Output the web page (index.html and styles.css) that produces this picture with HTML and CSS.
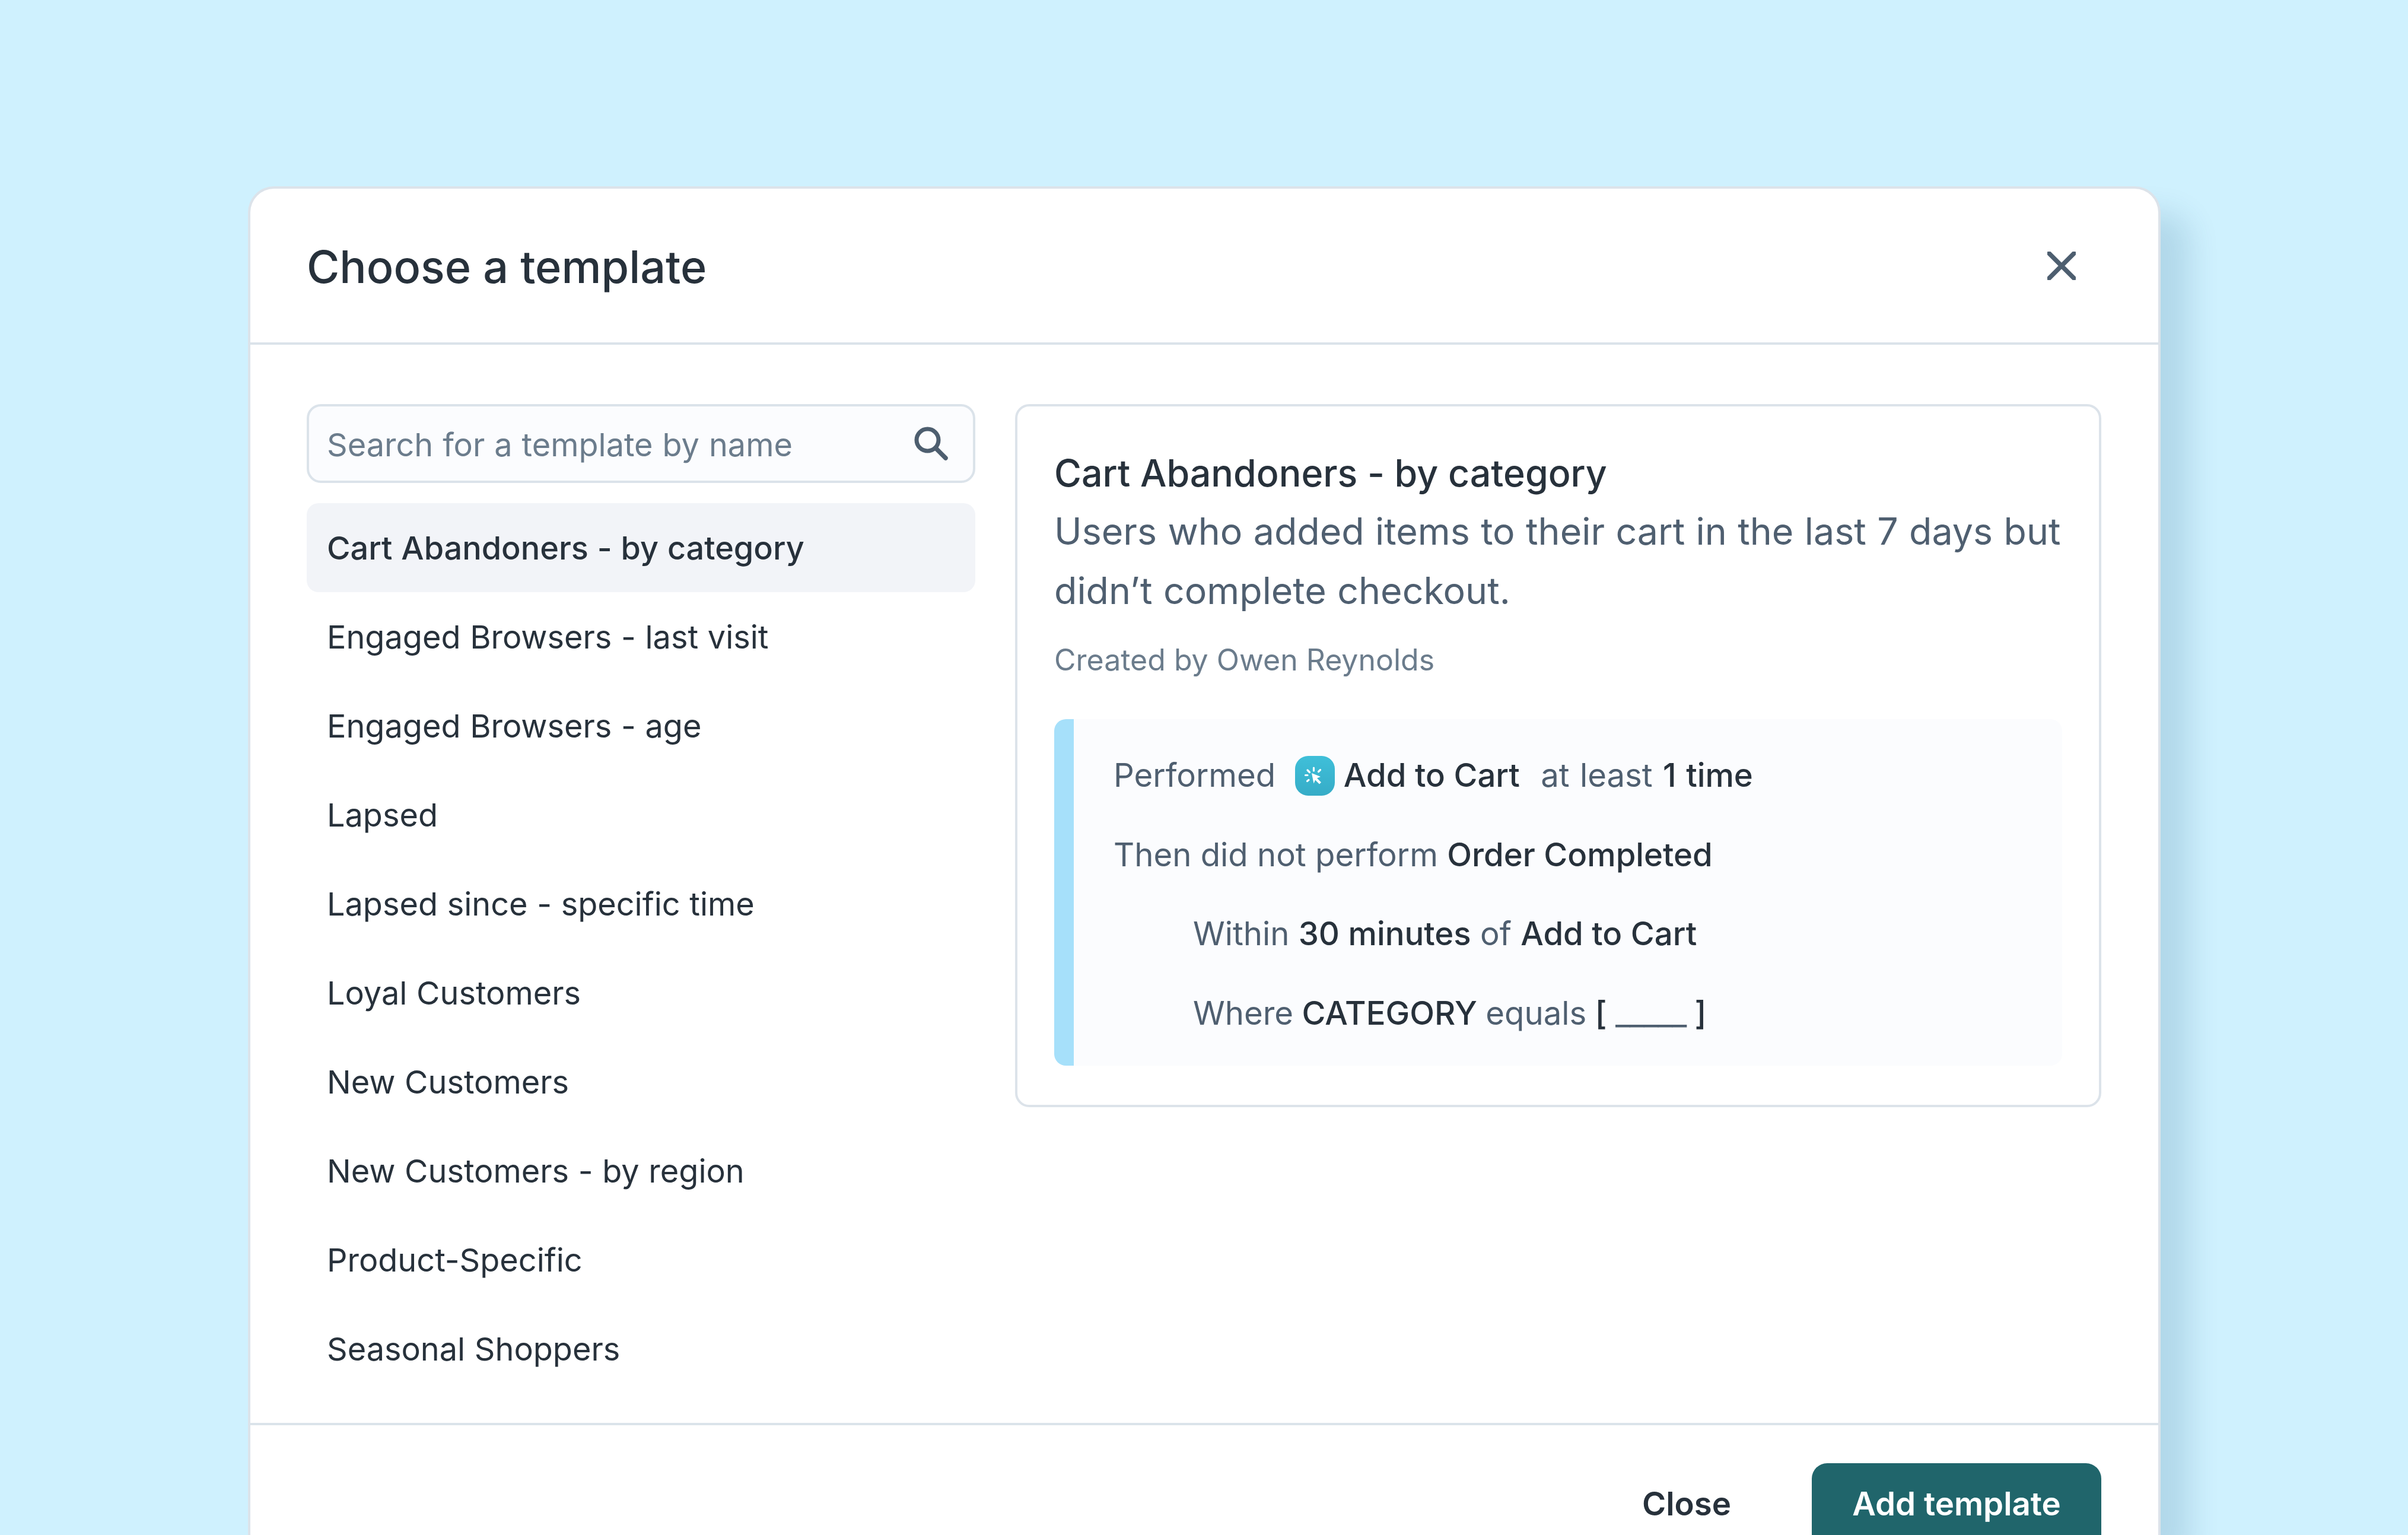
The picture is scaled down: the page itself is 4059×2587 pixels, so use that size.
FILE: index.html
```html
<!DOCTYPE html>
<html lang="en">
<head>
<meta charset="utf-8">
<title>Choose a template</title>
<link rel="stylesheet" href="styles.css">
</head>
<body>
<main class="modal">
  <header class="modal-head">
    <h1 class="modal-title">Choose a template</h1>
    <svg class="close-icon" viewBox="0 0 48 48" width="48" height="48"><path d="M3 3L45 45M45 3L3 45" fill="none" stroke="#4d5e6f" stroke-width="7.5" stroke-linecap="round"/></svg>
  </header>
  <div class="modal-body">
    <aside class="side">
      <div class="search">
        <span class="search-text">Search for a template by name</span>
        <svg class="search-icon" viewBox="0 0 58 58" width="58" height="58"><circle cx="22.5" cy="22.5" r="18.5" fill="none" stroke="#4d5e6f" stroke-width="7"/><path d="M36 36L53 53" fill="none" stroke="#4d5e6f" stroke-width="7.5" stroke-linecap="round"/></svg>
      </div>
      <ul class="list">
        <li class="item item-active">Cart Abandoners - by category</li>
        <li class="item">Engaged Browsers - last visit</li>
        <li class="item">Engaged Browsers - age</li>
        <li class="item">Lapsed</li>
        <li class="item">Lapsed since - specific time</li>
        <li class="item">Loyal Customers</li>
        <li class="item">New Customers</li>
        <li class="item">New Customers - by region</li>
        <li class="item">Product-Specific</li>
        <li class="item">Seasonal Shoppers</li>
      </ul>
    </aside>
    <section class="detail">
      <h2 class="detail-title">Cart Abandoners - by category</h2>
      <p class="detail-desc">Users who added items to their cart in the last 7 days but didn’t complete checkout.</p>
      <p class="detail-meta">Created by Owen Reynolds</p>
      <div class="rules">
        <div class="rule">Performed
          <svg class="event-icon" viewBox="0 0 67 67" width="67" height="67">
            <defs><linearGradient id="tile" x1="0" y1="0" x2="0" y2="1"><stop offset="0" stop-color="#3fbfd9"/><stop offset="1" stop-color="#36acc7"/></linearGradient></defs>
            <rect width="67" height="67" rx="22" fill="url(#tile)"/>
            <path d="M31.500 20v5M21 24l3.500 3.500M42.500 23.500l-3 3M17.500 32.500h3.500M23 40.500l-2.500 2" fill="none" stroke="#fff" stroke-width="3.200" stroke-linecap="round"/>
            <path d="M28 29l15 6-6 2.500 7 7-3 3-7-7-2.500 6z" fill="#fff"/>
          </svg>
          <b class="strong">Add to Cart</b>
          <span class="after-event">at least <b class="strong">1 time</b></span>
        </div>
        <div class="rule">Then did not perform <b class="strong">Order Completed</b></div>
        <div class="rule rule-sub">Within <b class="strong">30 minutes</b> of <b class="strong">Add to Cart</b></div>
        <div class="rule rule-sub rule-tight">Where <b class="strong">CATEGORY</b> equals <b class="strong">[</b> <span class="blank">_____</span> <b class="strong">]</b></div>
      </div>
    </section>
  </div>
  <footer class="modal-foot">
    <span class="btn-close">Close</span>
    <span class="btn-add">Add template</span>
  </footer>
</main>
</body>
</html>
```
FILE: styles.css
```css
html, body {
  margin: 0;
  height: 2587px;
  overflow: hidden;
}
body {
  background: #cff1fe;
  font-family: Inter, "Liberation Sans", sans-serif;
  color: #27313b;
  padding: 314px 417px 0 418px;
  box-sizing: border-box;
}
.modal {
  background: #fff;
  border: 4px solid #dce3ea;
  border-bottom: 0;
  border-radius: 44px 44px 0 0;
  box-shadow: 50px 45px 50px rgba(0, 70, 110, 0.14);
  display: flex;
  flex-direction: column;
  height: 2273px;
  box-sizing: border-box;
  overflow: hidden;
}
.modal-head {
  display: flex;
  justify-content: space-between;
  align-items: center;
  height: 259px;
  padding: 0 139px 0 95px;
  border-bottom: 4px solid #dbe3ea;
  flex: none;
}
.modal-title {
  margin: 3px 0 0;
  font-size: 75.500px;
  font-weight: 500;
}
.close-icon { flex: none; }
.modal-body {
  display: flex;
  gap: 67px;
  padding: 100px 96px 0 95px;
  height: 1817px;
  box-sizing: border-box;
  flex: none;
  align-items: flex-start;
}
.side {
  width: 1127px;
  flex: none;
}
.search {
  display: flex;
  align-items: center;
  justify-content: space-between;
  height: 133px;
  box-sizing: border-box;
  padding: 0 41px 0 30px;
  background: #fbfcfe;
  border: 4px solid #dbe3ea;
  border-radius: 24px;
}
.search-text {
  font-size: 54px;
  word-spacing: 0.800px;
  margin-top: 3px;
  color: #6b7c8c;
}
.list {
  list-style: none;
  margin: 34px 0 0;
  padding: 0;
}
.item {
  height: 150px;
  line-height: 152px;
  padding-left: 34px;
  font-size: 54px;
  word-spacing: 0.500px;
}
.item-active {
  background: #f2f4f8;
  border-radius: 20px;
  font-weight: 500;
}
.detail {
  flex: 1;
  border: 4px solid #dce3ea;
  border-radius: 24px;
  padding: 64px 62px 62px;
  box-sizing: border-box;
  height: 1185px;
}
.detail-title {
  margin: 0;
  font-size: 62.700px;
  font-weight: 500;
  line-height: 96px;
}
.detail-desc {
  margin: 0;
  font-size: 62.700px;
  word-spacing: 0.800px;
  line-height: 100px;
  color: #4f5f70;
}
.detail-meta {
  margin: 27px 0 0;
  font-size: 50px;
  line-height: 80px;
  color: #6b7c8c;
}
.rules {
  margin-top: 60px;
  height: 584px;
  box-sizing: border-box;
  background: #fbfcfe;
  border-left: 33px solid #a6e0fa;
  border-radius: 20px;
  padding: 26px 0 0 67px;
}
.rule {
  height: 133.500px;
  line-height: 136px;
  font-size: 54.500px;
  color: #4f5f70;
}
.rule-sub { padding-left: 134px; }
.rule-tight { word-spacing: -1px; }
.strong {
  color: #27313b;
  font-weight: 500;
}
.blank { letter-spacing: -1px; }
.event-icon {
  vertical-align: middle;
  margin: -8px 0 0 17px;
}
.after-event {
  margin-left: 20px;
  word-spacing: 2px;
}
.modal-foot {
  display: flex;
  justify-content: flex-end;
  gap: 136px;
  align-items: flex-start;
  border-top: 4px solid #dbe3ea;
  padding: 64px 96px 0 0;
  font-size: 54.600px;
  font-weight: 600;
}
.btn-close {
  line-height: 136px;
}
.btn-add {
  display: block;
  width: 488px;
  height: 150px;
  line-height: 136px;
  text-align: center;
  background: #20656b;
  color: #fff;
  border-radius: 26px;
}
```
